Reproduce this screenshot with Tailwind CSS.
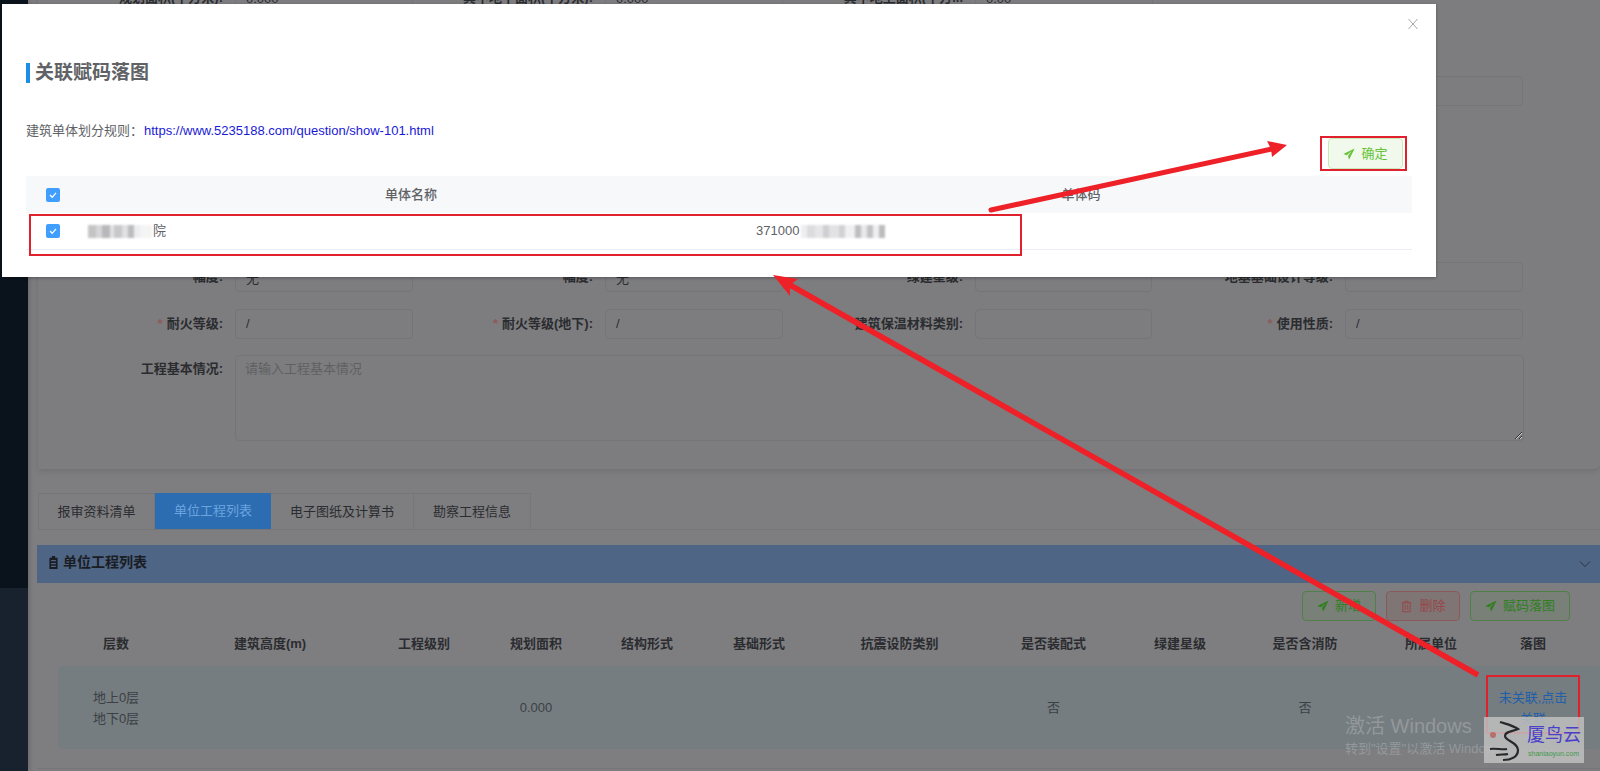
<!DOCTYPE html>
<html lang="zh-CN">
<head>
    <meta charset="UTF-8">
    <meta name="viewport" content="width=device-width, initial-scale=1.0">
    <title>关联赋码落图</title>
    <script src="https://cdn.jsdelivr.net/npm/@tailwindcss/browser@4"></script>
</head>
<body class="relative flex h-[771px] w-[1600px] overflow-hidden bg-[#7e7e80] font-['Liberation_Sans','Noto_Sans_CJK_SC',sans-serif] text-[13px] text-[#2b2c30]">

    <!-- Sidebar -->
    <aside class="flex w-[28px] shrink-0 flex-col shadow-[2px_0_4px_rgba(0,0,0,0.15)]">
        <div class="h-[588px] bg-[#0a131c]"></div>
        <div class="flex-1 bg-[#17222e]"></div>
    </aside>

    <!-- Page behind the dialog -->
    <main class="-mt-[37px] flex-1 pl-[10px]">

        <section class="rounded-br-md bg-[#7d7d7f] pb-[28px] pt-[20px] shadow-[0_2px_6px_rgba(0,0,0,0.12)]">
            <div class="grid grid-cols-[370px_370px_370px_1fr] gap-y-[16.5px] font-semibold">
                <div class="flex h-[30px] items-center">
                    <label class="w-[185px] shrink-0 text-right">规划面积(平方米):</label>
                    <input readonly value="0.000" class="ml-[12px] h-full w-[178px] rounded border border-[#757577] px-[10px] font-normal">
                </div>
                <div class="flex h-[30px] items-center">
                    <label class="w-[185px] shrink-0 text-right">其中地下面积(平方米):</label>
                    <input readonly value="0.000" class="ml-[12px] h-full w-[178px] rounded border border-[#757577] px-[10px] font-normal">
                </div>
                <div class="col-span-2 flex h-[30px] items-center">
                    <label class="w-[185px] shrink-0 text-right">其中地上面积(平方...</label>
                    <input readonly value="0.00" class="ml-[12px] h-full w-[178px] rounded border border-[#757577] px-[10px] font-normal">
                </div>

                <!-- rows hidden by the dialog -->
                <div class="col-span-4 h-[30px]"></div>
                <div class="col-start-4 flex h-[30px] items-center">
                    <label class="w-[185px] shrink-0 text-right"></label>
                    <input readonly class="ml-[12px] h-full w-[178px] rounded border border-[#757577]">
                </div>
                <div class="col-span-4 h-[30px]"></div>
                <div class="col-span-4 h-[30px]"></div>
                <div class="col-span-4 h-[30px]"></div>

                <div class="flex h-[30px] items-center">
                    <label class="w-[185px] shrink-0 text-right">幅度:</label>
                    <input readonly value="无" class="ml-[12px] h-full w-[178px] rounded border border-[#757577] px-[10px] font-normal">
                </div>
                <div class="flex h-[30px] items-center">
                    <label class="w-[185px] shrink-0 text-right">幅度:</label>
                    <input readonly value="无" class="ml-[12px] h-full w-[178px] rounded border border-[#757577] px-[10px] font-normal">
                </div>
                <div class="flex h-[30px] items-center">
                    <label class="w-[185px] shrink-0 text-right">绿建星级:</label>
                    <input readonly class="ml-[12px] h-full w-[178px] rounded border border-[#757577]">
                </div>
                <div class="flex h-[30px] items-center">
                    <label class="w-[185px] shrink-0 text-right">地基基础设计等级:</label>
                    <input readonly class="ml-[12px] h-full w-[178px] rounded border border-[#757577]">
                </div>

                <div class="flex h-[30px] items-center">
                    <label class="w-[185px] shrink-0 text-right"><span class="mr-1 text-[#8f5a5a]">*</span>耐火等级:</label>
                    <input readonly value="/" class="ml-[12px] h-full w-[178px] rounded border border-[#757577] px-[10px] font-normal">
                </div>
                <div class="flex h-[30px] items-center">
                    <label class="w-[185px] shrink-0 text-right"><span class="mr-1 text-[#8f5a5a]">*</span>耐火等级(地下):</label>
                    <input readonly value="/" class="ml-[12px] h-full w-[178px] rounded border border-[#757577] px-[10px] font-normal">
                </div>
                <div class="flex h-[30px] items-center">
                    <label class="w-[185px] shrink-0 text-right">建筑保温材料类别:</label>
                    <input readonly class="ml-[12px] h-full w-[178px] rounded border border-[#757577]">
                </div>
                <div class="flex h-[30px] items-center">
                    <label class="w-[185px] shrink-0 text-right"><span class="mr-1 text-[#8f5a5a]">*</span>使用性质:</label>
                    <input readonly value="/" class="ml-[12px] h-full w-[178px] rounded border border-[#757577] px-[10px] font-normal">
                </div>

                <div class="col-span-4 flex h-[86px]">
                    <label class="w-[185px] shrink-0 pt-[4px] text-right">工程基本情况:</label>
                    <textarea placeholder="请输入工程基本情况" class="ml-[12px] h-full w-[1289px] rounded border border-[#757577] px-[9px] py-[3px] font-normal placeholder:text-[#606062]"></textarea>
                </div>
            </div>
        </section>

        <!-- Tabs -->
        <nav class="mt-[24px] flex h-[37px] border-b border-[#767678]">
            <a class="flex w-[117px] items-center justify-center border border-b-0 border-[#767678]">报审资料清单</a>
            <a class="flex w-[116px] items-center justify-center bg-[#2c6cb0] text-[#6aa5e0]">单位工程列表</a>
            <a class="flex w-[143px] items-center justify-center border-r border-t border-[#767678]">电子图纸及计算书</a>
            <a class="flex w-[117px] items-center justify-center border-r border-t border-[#767678]">勘察工程信息</a>
        </nav>

        <!-- Unit project panel -->
        <section class="mt-[15px]">
            <div class="-ml-px flex h-[38px] items-center justify-between bg-[#4f6585] pl-[10px] pr-[9px]">
                <h2 class="flex items-center gap-[3px] pb-[3px] text-[14px] font-bold text-[#1a1d24]">
                    <svg class="h-[13px] w-[13px]" viewBox="0 0 16 16" fill="#1a1d24"><path d="M6 0h4v2h3v14H3V2h3zM5 5v1.5h6V5zM5 8.5V10h6V8.5zM5 12v1.5h6V12z"/></svg>
                    单位工程列表
                </h2>
                <svg class="h-[12px] w-[12px]" viewBox="0 0 12 12" fill="none" stroke="#2a3040" stroke-width="1"><path d="M1 3.5l5 5 5-5"/></svg>
            </div>

            <div class="mt-[8px] flex justify-end gap-[10px] pr-[30px]">
                <button class="flex h-[30px] w-[74px] items-center justify-center gap-[6px] rounded border border-[#4f8048] bg-[#788078] text-[#2f7f20]">
                    <svg class="h-[12px] w-[12px]" viewBox="0 0 16 16" fill="#2f7f1c"><path d="M15.5.5L.5 8l4.6 1.6L11.500 4 6.700 10.700 8 15.500z"/></svg>
                    新增
                </button>
                <button class="flex h-[30px] w-[74px] items-center justify-center gap-[6px] rounded border border-[#8a5a5a] bg-[#7f7575] text-[#984646]">
                    <svg class="h-[13px] w-[13px]" viewBox="0 0 16 16" fill="none" stroke="#984646" stroke-width="1.200"><path d="M2 3.500h12M6 3.500V1.500h4v2M3.500 3.500v11h9v-11M6.500 6v6M9.500 6v6"/></svg>
                    删除
                </button>
                <button class="flex h-[30px] w-[100px] items-center justify-center gap-[6px] rounded border border-[#4f8048] bg-[#788078] text-[#2f7f20]">
                    <svg class="h-[12px] w-[12px]" viewBox="0 0 16 16" fill="#2f7f1c"><path d="M15.500.5L.5 8l4.600 1.600L11.500 4 6.700 10.700 8 15.500z"/></svg>
                    赋码落图
                </button>
            </div>

            <div class="ml-[20px] grid h-[45px] grid-cols-[116px_192px_116px_108px_114px_110px_171px_137px_116px_134px_118px_86px] items-center text-center font-semibold">
                <div>层数</div>
                <div>建筑高度(m)</div>
                <div>工程级别</div>
                <div>规划面积</div>
                <div>结构形式</div>
                <div>基础形式</div>
                <div>抗震设防类别</div>
                <div>是否装配式</div>
                <div>绿建星级</div>
                <div>是否含消防</div>
                <div>所属单位</div>
                <div>落图</div>
            </div>
            <div class="ml-[20px] grid h-[83px] grid-cols-[116px_192px_116px_108px_114px_110px_171px_137px_116px_134px_118px_86px] items-center rounded bg-[#757d81] text-center leading-[21px] text-[#3c3f44]">
                <div>地上0层<br>地下0层</div>
                <div></div>
                <div></div>
                <div>0.000</div>
                <div></div>
                <div></div>
                <div></div>
                <div>否</div>
                <div></div>
                <div>否</div>
                <div></div>
                <a class="px-[6px] text-[#1f5ea8]">未关联,点击关联</a>
            </div>
            <div class="-ml-px mt-[19px] h-px bg-[#767678]"></div>
        </section>
    </main>

    <!-- Dialog -->
    <div class="absolute left-[2px] top-[4px] h-[273px] w-[1434px] bg-white px-[24px] pt-[59px] shadow-[0_1px_3px_rgba(0,0,0,0.3)]">
        <button class="absolute right-[17px] top-[14px]">
            <svg class="h-[12px] w-[12px]" viewBox="0 0 12 12" fill="none" stroke="#a3a6ab" stroke-width="1"><path d="M1.500 1l9 10M10.500 1l-9 10"/></svg>
        </button>

        <h1 class="flex h-[20px] items-center gap-[5px] border-l-4 border-[#1b8fe6] pl-[5px] text-[19px] font-bold text-[#606266]">关联赋码落图</h1>

        <p class="mt-[38px] h-[20px] leading-[20px] text-[#606266]">建筑单体划分规则：<a class="ml-px text-[#1a1ad6]">https://www.5235188.com/question/show-101.html</a></p>

        <div class="-mt-[3px] flex justify-end pr-[9px]">
            <button class="flex h-[31px] w-[75px] items-center justify-center gap-[6px] rounded border border-[#c9e8b8] bg-[#f0f9eb] text-[#67c23a]">
                <svg class="h-[12px] w-[12px]" viewBox="0 0 16 16" fill="#67c23a"><path d="M15.500.5L.5 8l4.600 1.600L11.500 4 6.700 10.700 8 15.500z"/></svg>
                确定
            </button>
        </div>

        <div class="mt-[7px]">
            <div class="grid h-[37px] grid-cols-[46px_678px_1fr] items-center bg-[#f7f8fa] font-medium text-[#606266]">
                <div class="flex justify-center pl-[8px]">
                    <span class="flex h-[14px] w-[14px] items-center justify-center rounded-[2px] bg-[#409eff]">
                        <svg class="h-[10px] w-[10px]" viewBox="0 0 10 10" fill="none" stroke="#fff" stroke-width="1.300"><path d="M2 5l2.200 2.300L8 2.800"/></svg>
                    </span>
                </div>
                <div class="text-center">单体名称</div>
                <div class="text-center">单体码</div>
            </div>
            <div class="grid h-[37px] grid-cols-[46px_678px_1fr] items-center border-b border-[#ebeef5] text-[#606266]">
                <div class="flex justify-center pl-[8px]">
                    <span class="flex h-[14px] w-[14px] items-center justify-center rounded-[2px] bg-[#409eff]">
                        <svg class="h-[10px] w-[10px]" viewBox="0 0 10 10" fill="none" stroke="#fff" stroke-width="1.300"><path d="M2 5l2.200 2.300L8 2.800"/></svg>
                    </span>
                </div>
                <!-- name and code are pixelated in the screenshot -->
                <div class="flex items-center pl-[16px]">
                    <span class="flex h-[13px] w-[64px] blur-[1px]">
                        <i class="w-[8px] bg-[#c4c4c6]"></i><i class="w-[6px] bg-[#d6d6d8]"></i><i class="w-[8px] bg-[#b8b8ba]"></i><i class="w-[4px] bg-[#e2e2e4]"></i><i class="w-[8px] bg-[#c8c8ca]"></i><i class="w-[6px] bg-[#e0e0e2]"></i><i class="w-[6px] bg-[#bcbcbe]"></i><i class="w-[6px] bg-[#ecedee]"></i><i class="w-[12px] bg-[#f4f4f5]"></i>
                    </span>
                    <span class="ml-[1px]">院</span>
                </div>
                <div class="flex items-center pl-[6px]">
                    371000<span class="ml-[2px] flex h-[13px] w-[84px] blur-[1px]">
                        <i class="w-[6px] bg-[#eeeeef]"></i><i class="w-[8px] bg-[#dcdcde]"></i><i class="w-[8px] bg-[#e6e6e8]"></i><i class="w-[6px] bg-[#cfcfd1]"></i><i class="w-[10px] bg-[#e2e2e4]"></i><i class="w-[6px] bg-[#d2d2d4]"></i><i class="w-[10px] bg-[#f0f0f1]"></i><i class="w-[6px] bg-[#bebec0]"></i><i class="w-[6px] bg-[#e8e8ea]"></i><i class="w-[6px] bg-[#c2c2c4]"></i><i class="w-[6px] bg-[#efeff0]"></i><i class="w-[6px] bg-[#bcbcbe]"></i>
                    </span>
                </div>
            </div>
        </div>
    </div>

    <!-- Windows activation notice -->
    <div class="absolute left-[1345px] top-[713px] text-[#94989b]">
        <div class="text-[20px] leading-[26px]">激活 Windows</div>
        <div class="mt-[1px] leading-[18px]">转到"设置"以激活 Windows。</div>
    </div>

    <!-- Annotations drawn on top of the screenshot -->
    <svg class="pointer-events-none absolute left-0 top-0" width="1600" height="771" fill="none">
        <rect x="1321" y="137" width="85" height="33" stroke="#e0202c" stroke-width="2"/>
        <rect x="30" y="215" width="991" height="40" stroke="#e0202c" stroke-width="2"/>
        <rect x="1487" y="676" width="92" height="57" stroke="#e0202c" stroke-width="2"/>
        <path d="M991 210L1272 149" stroke="#ee2028" stroke-width="5" stroke-linecap="round"/>
        <path d="M1287 145L1267 141L1271 149L1272 157Z" fill="#ee2028"/>
        <path d="M1478 675L790 285" stroke="#ee2028" stroke-width="5.500"/>
        <path d="M773 275L798 279L790 285L790 296Z" fill="#ee2028"/>
    </svg>

    <!-- Site watermark -->
    <div class="absolute left-[1484px] top-[717px] h-[46px] w-[100px] bg-[#bfbfbf]/85">
        <svg class="absolute left-0 top-0" width="44" height="46" fill="none">
            <circle cx="9" cy="18" r="3" fill="#b5544f" opacity="0.7"/>
            <path d="M16 5C22 7 28 8 34 12C28 15 21 14 21 19C21 24 34 25 34 33C34 40 27 43 19 43" stroke="#26282b" stroke-width="2.200"/>
            <path d="M6 32C12 31 18 33 23 32M12 38C16 37 20 38 24 37" stroke="#26282b" stroke-width="2"/>
        </svg>
        <div class="absolute left-[43px] top-[7px] text-[18px] leading-[22px] text-[#4a40c8]">厦鸟云</div>
        <div class="absolute left-[44px] top-[32px] text-[7px] leading-[10px] text-[#3f9a4d]">shaniaoyun.com</div>
    </div>

</body>
</html>
